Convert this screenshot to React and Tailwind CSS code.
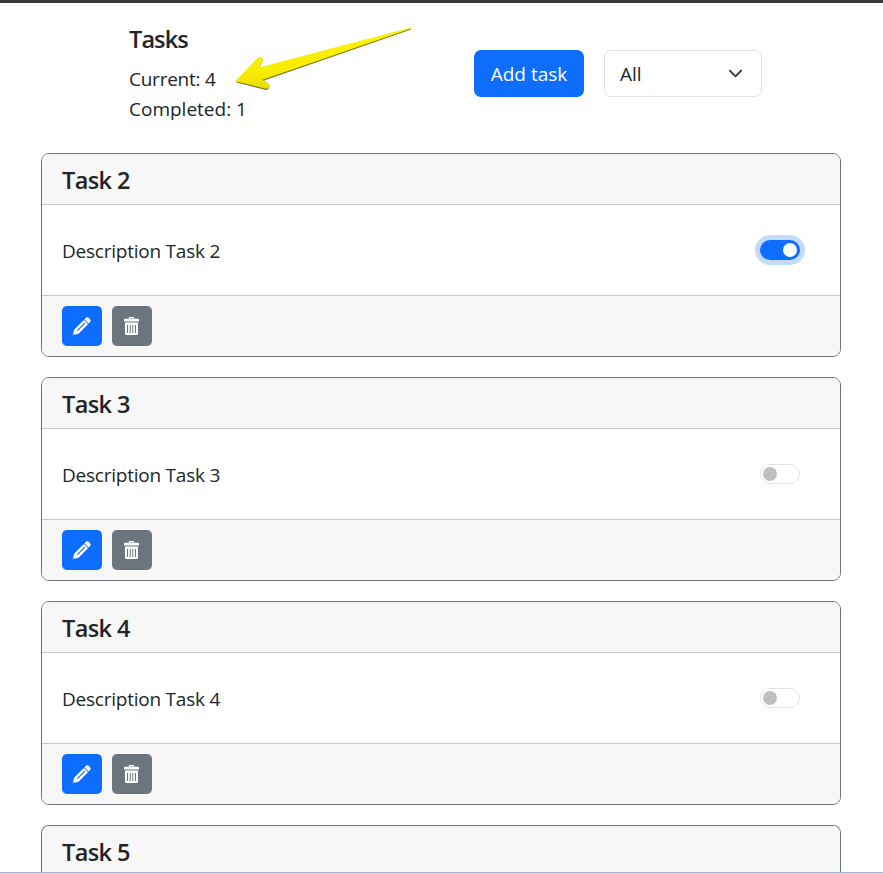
import React from "react";

function PencilIcon() {
  return (
    <svg width="20" height="20" viewBox="0 0 20 20" fill="none">
      <path fill="#fff" fillRule="evenodd" d="M1 19 2.300 13.500 11.800 4 16 8.200 6.500 17.700ZM4.900 14.200 5.800 15.100 13.300 7.600 12.400 6.700Z" />
      <path fill="#fff" d="M12.400 3.400 14 1.800a2 2 0 0 1 2.600 0L18.200 3.400a2 2 0 0 1 0 2.600L16.600 7.600Z" />
    </svg>
  );
}

function TrashIcon() {
  return (
    <svg width="20" height="20" viewBox="0 0 20 20" fill="none">
      <path d="M7.500 3V1.600h4V3" stroke="#fff" strokeWidth="1.200" />
      <path fill="#fff" d="M3 2.800h13a1 1 0 0 1 1 1V5.500H2V3.800a1 1 0 0 1 1-1Z" />
      <path fill="#fff" fillRule="evenodd" d="M3 6.500h13v11a1.500 1.500 0 0 1-1.500 1.500h-10A1.500 1.500 0 0 1 3 17.500ZM5 9v8h1V9ZM7.700 9v8h1V9ZM10.300 9v8h1V9ZM13 9v8h1V9Z" />
    </svg>
  );
}

function Toggle({ on }) {
  return on ? (
    <span className="flex h-5 w-10 items-center justify-end rounded-full bg-[#0d6efd] pr-[3px] ring-5 ring-[#c2dbfe]">
      <span className="size-3.5 rounded-full bg-white" />
    </span>
  ) : (
    <span className="flex h-5 w-10 items-center rounded-full border border-[#dee2e6] bg-white pl-[2px]">
      <span className="size-3.5 rounded-full bg-[#bfbfbf]" />
    </span>
  );
}

function CardTitle({ n }) {
  return (
    <header className="flex h-[51px] items-center border-b border-[#c8c9ca] bg-[#f7f7f7] px-5 pt-0.5">
      <h5 className="text-[23.5px] leading-[30px] font-semibold tracking-[-0.6px]">Task {n}</h5>
    </header>
  );
}

function TaskCard({ n, on }) {
  return (
    <section className="h-[204px] shrink-0 overflow-hidden rounded-[8px] border border-[#6c757d] bg-white">
      <CardTitle n={n} />
      <div className="flex h-[90px] items-center justify-between pr-10 pl-5">
        <p className="pt-0.5 text-[19px] leading-[30px] tracking-[-0.23px]">Description Task {n}</p>
        <Toggle on={on} />
      </div>
      <footer className="flex h-[61px] items-center gap-2.5 border-t border-[#c8c9ca] bg-[#f7f7f7] px-5">
        <button className="flex size-10 items-center justify-center rounded-[5px] bg-[#0d6efd]">
          <PencilIcon />
        </button>
        <button className="flex size-10 items-center justify-center rounded-[5px] bg-[#6c757d]">
          <TrashIcon />
        </button>
      </footer>
    </section>
  );
}

export default function App() {
  return (
    <div className="relative flex h-[874px] w-[883px] flex-col overflow-hidden bg-white font-['Open_Sans','Noto_Sans',sans-serif] text-[#212529]">
      <div className="h-[3px] shrink-0 bg-[#3b3b3b]" />
      <div className="flex h-[150px] shrink-0 items-start pl-[129px]">
        <div className="w-[345px] pt-[21px]">
          <h5 className="mb-2.5 text-[23.5px] leading-[30px] font-semibold tracking-[-0.9px]">Tasks</h5>
          <p className="text-[19px] leading-[30px] tracking-[-0.25px]">Current: 4</p>
          <p className="text-[19px] leading-[30px]">Completed: 1</p>
        </div>
        <button className="mt-[47px] h-[47px] w-[110px] rounded-[7px] bg-[#0d6efd] pt-0.5 text-[19px] whitespace-nowrap text-white">Add task</button>
        <div className="mt-[47px] ml-5 flex h-[47px] w-[158px] items-center justify-between rounded-[7px] border border-[#dee2e6] pr-[18px] pl-[15px]">
          <span className="pt-0.5 text-[19px]">All</span>
          <svg width="15" height="15" viewBox="0 0 16 16" fill="none">
            <path d="m2 5 6 6 6-6" stroke="#343a40" strokeWidth="2" strokeLinecap="round" strokeLinejoin="round" />
          </svg>
        </div>
      </div>
      <main className="flex h-[719px] shrink-0 flex-col gap-5 overflow-hidden pr-[42px] pl-[41px]">
        <TaskCard n={2} on />
        <TaskCard n={3} />
        <TaskCard n={4} />
        <section className="shrink-0 overflow-hidden rounded-t-[8px] border border-b-0 border-[#6c757d] bg-white">
          <CardTitle n={5} />
        </section>
      </main>
      <div className="h-0.5 shrink-0 border-t border-[#a9b6cc] bg-[#d5dcea]" />
      <svg className="absolute top-[22px] left-[230px]" width="186" height="72" viewBox="230 22 186 72">
        <defs>
          <linearGradient id="arrow" x1="0" y1="0" x2="0.15" y2="1">
            <stop offset="0" stopColor="#fff200" />
            <stop offset="0.7" stopColor="#faee00" />
            <stop offset="1" stopColor="#e8dc00" />
          </linearGradient>
        </defs>
        <path d="M236 82.200 266 90q3.500-.5 3.500-5L264 80.500 411 29.500V28.500L259 68 263 60Q261.500 56 258 58.500Z" fill="#77741c" />
        <path d="M235.500 81.300 266 88.800q4-.5 3.500-4L262.500 79.800 411 28.500V27.500L259 67.500 263 60Q261.500 55.500 257.500 58Z" fill="url(#arrow)" />
      </svg>
    </div>
  );
}
